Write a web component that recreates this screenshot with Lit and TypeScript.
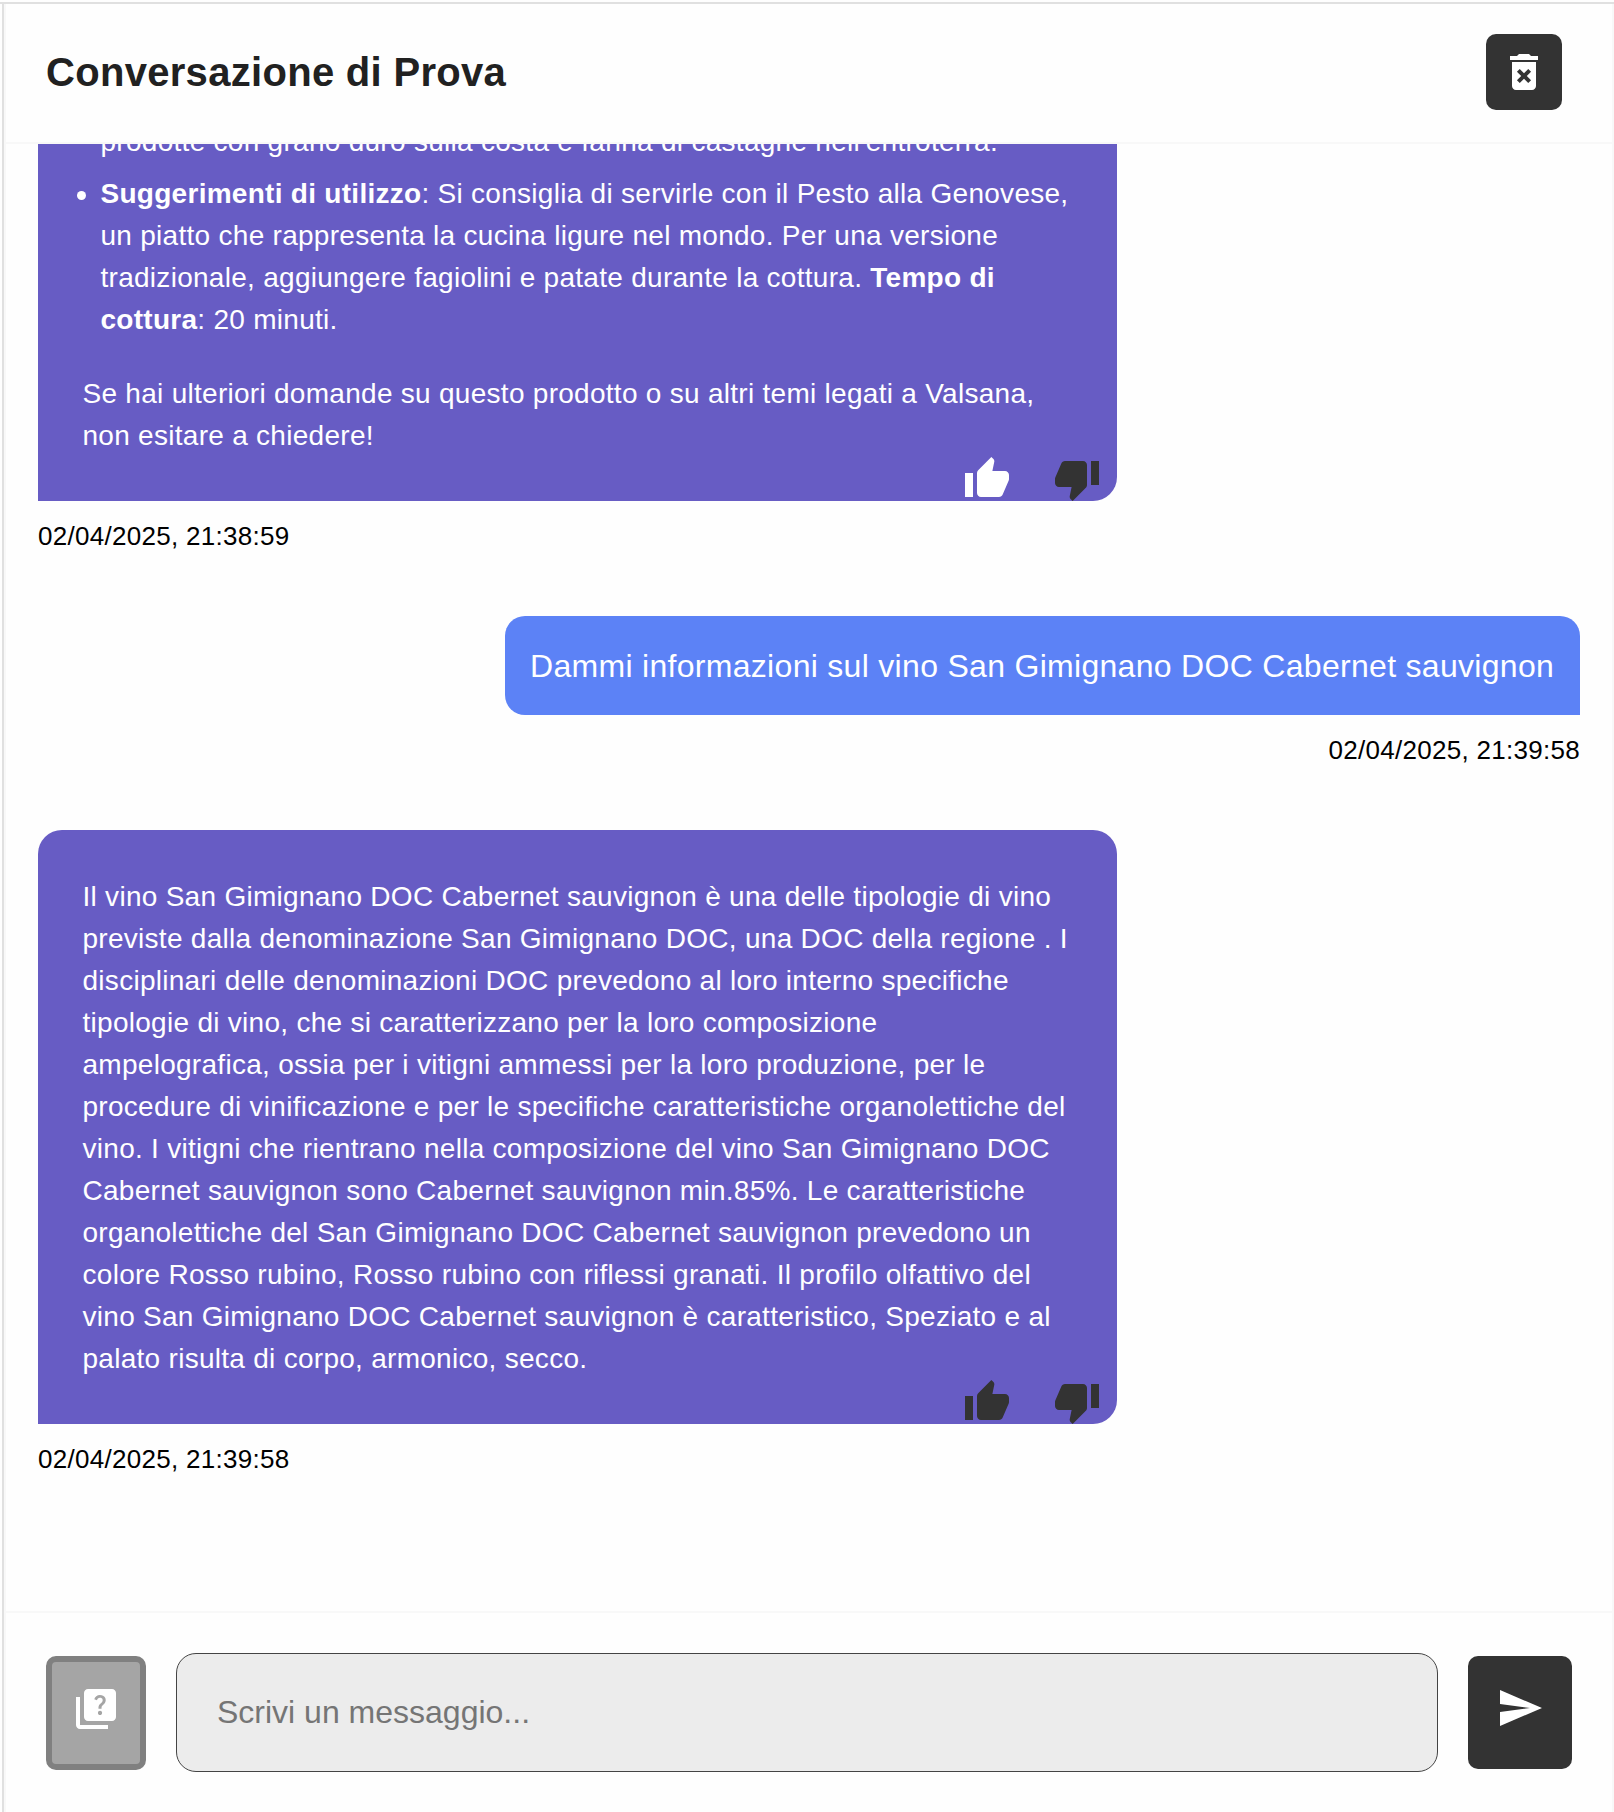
import { LitElement, html, css, svg } from "lit";
import { customElement, property } from "lit/decorators.js";
import { classMap } from "lit/directives/class-map.js";

const ICONS: Record<string, string> = {
  deleteForever:
    "M6 19c0 1.1.9 2 2 2h8c1.1 0 2-.9 2-2V7H6v12zm2.46-7.12 1.41-1.41L12 12.59l2.12-2.12 1.41 1.41L13.41 14l2.12 2.12-1.41 1.41L12 15.41l-2.12 2.12-1.41-1.41L10.59 14l-2.13-2.12zM15.5 4l-1-1h-5l-1 1H5v2h14V4z",
  thumbUp:
    "M1 21h4V9H1v12zm22-11c0-1.1-.9-2-2-2h-6.31l.95-4.57.03-.32c0-.41-.17-.79-.44-1.06L14.17 1 7.59 7.59C7.22 7.95 7 8.45 7 9v10c0 1.1.9 2 2 2h9c.83 0 1.54-.5 1.84-1.22l3.02-7.05c.09-.23.14-.47.14-.73v-2z",
  thumbDown:
    "M15 3H6c-.83 0-1.54.5-1.84 1.22l-3.02 7.05c-.09.23-.14.47-.14.73v2c0 1.1.9 2 2 2h6.31l-.95 4.57-.03.32c0 .41.17.79.44 1.06L9.83 23l6.59-6.59c.36-.36.58-.86.58-1.41V5c0-1.1-.9-2-2-2zm4 0v12h4V3h-4z",
  quiz:
    "M4 6H2v14c0 1.1.9 2 2 2h14v-2H4V6zM20 2H8c-1.1 0-2 .9-2 2v12c0 1.1.9 2 2 2h12c1.1 0 2-.9 2-2V4c0-1.1-.9-2-2-2zm-5.99 13c-.59 0-1.05-.47-1.05-1.05 0-.59.47-1.04 1.05-1.04.59 0 1.04.45 1.04 1.04-.01.58-.45 1.05-1.04 1.05zm2.5-6.17c-.63.93-1.23 1.21-1.56 1.81-.13.24-.18.4-.18 1.18h-1.52c0-.41-.06-1.08.26-1.65.41-.73 1.18-1.16 1.63-1.8.48-.68.21-1.94-1.14-1.94-.88 0-1.32.67-1.5 1.23l-1.37-.57C11.51 5.96 12.52 5 13.99 5c1.23 0 2.08.56 2.51 1.26.37.6.58 1.73.01 2.57z",
  send: "M2.01 21 23 12 2.01 3 2 10l15 2-15 2z",
};

@customElement("chat-icon")
export class ChatIcon extends LitElement {
  @property() name = "send";

  static styles = css`
    :host { display: block; width: 48px; height: 48px; flex: none; }
    .icon { display: block; width: 100%; height: 100%; fill: currentColor; }
  `;

  render() {
    return html`<svg class="icon" viewBox="0 0 24 24">${svg`<path d=${ICONS[this.name]}></path>`}</svg>`;
  }
}

@customElement("bot-message")
export class BotMessage extends LitElement {
  @property() time = "";
  @property({ type: Boolean }) liked = false;

  static styles = css`
    :host { display: flex; flex-direction: column; flex: none; width: 1079px; margin-bottom: 60px; }
    .bubble {
      box-sizing: border-box;
      display: flex;
      flex-direction: column;
      padding: 46px 0 0 44.5px;
      background: #675cc4;
      color: #fff;
      border-radius: 24px 24px 24px 0;
      font-size: 28px;
      line-height: 42px;
      letter-spacing: 0.28px;
    }
    .body { padding-right: 46px; }
    .actions {
      display: flex;
      justify-content: flex-end;
      gap: 42px;
      height: 46px;
      margin-top: -2px;
      padding-right: 16px;
      color: #333;
    }
    .liked { color: #fff; }
    .time { margin-top: 16px; font-size: 26px; line-height: 39px; letter-spacing: 0.28px; color: #000; }
  `;

  render() {
    return html`
      <div class="bubble">
        <div class="body"><slot></slot></div>
        <div class="actions">
          <chat-icon name="thumbUp" class=${classMap({ liked: this.liked })}></chat-icon>
          <chat-icon name="thumbDown"></chat-icon>
        </div>
      </div>
      <div class="time">${this.time}</div>
    `;
  }
}

@customElement("app-root")
export class AppRoot extends LitElement {
  static styles = css`
    :host {
      display: block;
      height: 100vh;
      box-sizing: border-box;
      padding-top: 2px;
      background: #fefefe;
      font-family: "Liberation Sans", Arial, Helvetica, sans-serif;
    }
    .frame {
      box-sizing: border-box;
      height: 100%;
      border-top: 2px solid #e0e0e0;
      padding-left: 2px;
    }
    .panel {
      box-sizing: border-box;
      height: 100%;
      display: flex;
      flex-direction: column;
      border-left: 2px solid #e0e0e0;
    }
    .chat {
      box-sizing: border-box;
      flex: 1;
      min-height: 0;
      display: flex;
      flex-direction: column;
      border-left: 2px solid #f8f8f8;
      border-right: 2px solid #f8f8f8;
    }
    .header {
      box-sizing: border-box;
      flex: none;
      height: 140px;
      display: flex;
      align-items: center;
      justify-content: space-between;
      padding: 0 50px 2px 40px;
      border-bottom: 2px solid #f8f8f8;
    }
    .title { margin: 0; font-size: 40px; line-height: 64px; letter-spacing: 0.3px; font-weight: 700; color: #212121; }
    .btn {
      box-sizing: border-box;
      display: flex;
      justify-content: center;
      flex: none;
      border: 0;
      padding: 0;
      margin: 0;
      border-radius: 10px;
      background: #333;
      color: #fff;
    }
    .delete { width: 76px; height: 76px; align-items: center; }
    .messages {
      flex: 1;
      min-height: 0;
      overflow: hidden;
      display: flex;
      flex-direction: column;
      justify-content: flex-end;
      padding: 0 32px 72px;
    }
    .text { margin: 0; }
    .list { list-style: none; margin: 0 0 32px -6px; padding: 0; display: flex; flex-direction: column; gap: 10px; }
    .item { display: grid; grid-template-columns: 24px 1fr; }
    .item::before {
      content: "";
      width: 9px;
      height: 9px;
      margin-top: 18px;
      border-radius: 50%;
      background: #fff;
    }
    .item.continued::before { background: none; }
    .user { display: flex; flex-direction: column; align-items: flex-end; flex: none; margin-bottom: 60px; }
    .user-bubble {
      box-sizing: border-box;
      width: 1075px;
      height: 99px;
      display: flex;
      align-items: center;
      padding: 0 0 0 25px;
      border-radius: 20px 20px 0 20px;
      background: #5c82f6;
      color: #fff;
      font-size: 32px;
      line-height: 48px;
      letter-spacing: 0.3px;
      white-space: nowrap;
    }
    .time { margin-top: 16px; font-size: 26px; line-height: 39px; letter-spacing: 0.28px; color: #000; }
    .composer {
      box-sizing: border-box;
      flex: none;
      height: 201px;
      display: flex;
      align-items: flex-start;
      padding: 43px 40px 0;
      border-top: 2px solid #f8f8f8;
    }
    .quiz { width: 100px; height: 114px; border: 6px solid #808080; background: #a5a5a5; padding-top: 23px; }
    .send { width: 104px; height: 113px; padding-top: 28px; }
    .input {
      box-sizing: border-box;
      flex: 1;
      min-width: 0;
      height: 119px;
      margin: -3px 30px 0;
      padding: 0 40px;
      border: 1px solid #444;
      border-radius: 20px;
      background: #ececec;
      font: 32px "Liberation Sans", Arial, Helvetica, sans-serif;
      color: #212121;
      outline: none;
    }
    .input::placeholder { color: #757575; opacity: 1; }
  `;

  render() {
    return html`
      <div class="frame">
        <div class="panel">
          <div class="chat">
            <header class="header">
              <h1 class="title">Conversazione di Prova</h1>
              <button class="btn delete"><chat-icon name="deleteForever"></chat-icon></button>
            </header>
            <main class="messages">
              <bot-message time="02/04/2025, 21:38:59" liked>
                <ul class="list">
                  <li class="item continued"><div>prodotte con grano duro sulla costa e farina di castagne nell'entroterra.</div></li>
                  <li class="item">
                    <div><b>Suggerimenti di utilizzo</b>: Si consiglia di servirle con il Pesto alla Genovese, un piatto che rappresenta la cucina ligure nel mondo. Per una versione tradizionale, aggiungere fagiolini e patate durante la cottura. <b>Tempo di cottura</b>: 20 minuti.</div>
                  </li>
                </ul>
                <p class="text">Se hai ulteriori domande su questo prodotto o su altri temi legati a Valsana, non esitare a chiedere!</p>
              </bot-message>
              <section class="user">
                <div class="user-bubble">Dammi informazioni sul vino San Gimignano DOC Cabernet sauvignon</div>
                <div class="time">02/04/2025, 21:39:58</div>
              </section>
              <bot-message time="02/04/2025, 21:39:58">
                <p class="text">Il vino San Gimignano DOC Cabernet sauvignon è una delle tipologie di vino previste dalla denominazione San Gimignano DOC, una DOC della regione . I disciplinari delle denominazioni DOC prevedono al loro interno specifiche tipologie di vino, che si caratterizzano per la loro composizione ampelografica, ossia per i vitigni ammessi per la loro produzione, per le procedure di vinificazione e per le specifiche caratteristiche organolettiche del vino. I vitigni che rientrano nella composizione del vino San Gimignano DOC Cabernet sauvignon sono Cabernet sauvignon min.85%. Le caratteristiche organolettiche del San Gimignano DOC Cabernet sauvignon prevedono un colore Rosso rubino, Rosso rubino con riflessi granati. Il profilo olfattivo del vino San Gimignano DOC Cabernet sauvignon è caratteristico, Speziato e al palato risulta di corpo, armonico, secco.</p>
              </bot-message>
            </main>
            <footer class="composer">
              <button class="btn quiz"><chat-icon name="quiz"></chat-icon></button>
              <input class="input" placeholder="Scrivi un messaggio..." />
              <button class="btn send"><chat-icon name="send"></chat-icon></button>
            </footer>
          </div>
        </div>
      </div>
    `;
  }
}
